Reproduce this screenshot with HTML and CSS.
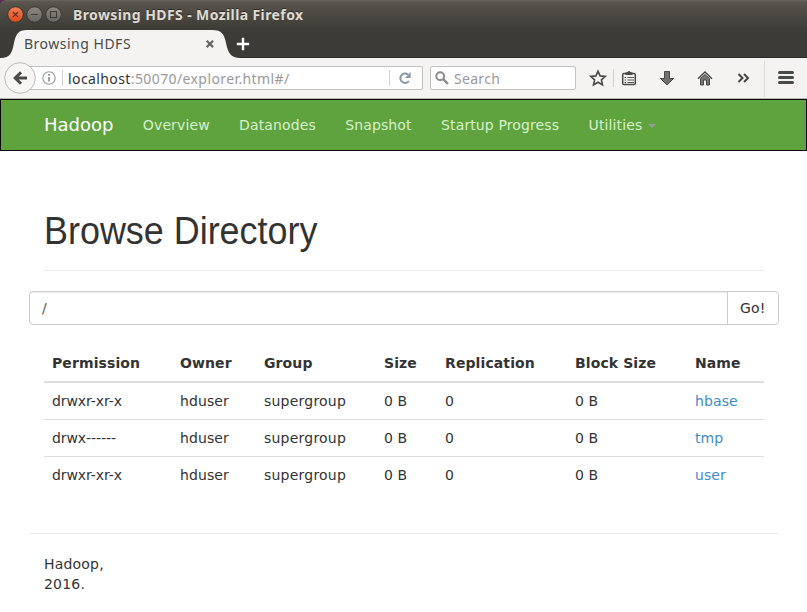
FILE: index.html
```html
<!DOCTYPE html>
<html lang="en">
<head>
<meta charset="utf-8">
<title>Browsing HDFS</title>
<link rel="stylesheet" href="styles.css">
</head>
<body>
<div class="chrome">
  <div class="titlebar">
    <svg class="winbtns" width="64" height="20" viewBox="0 0 64 20">
      <defs>
        <linearGradient id="orange" x1="0" y1="0" x2="0" y2="1"><stop offset="0" stop-color="#f4805a"/><stop offset="1" stop-color="#df4a16"/></linearGradient>
        <linearGradient id="gray" x1="0" y1="0" x2="0" y2="1"><stop offset="0" stop-color="#8b8981"/><stop offset="1" stop-color="#68665f"/></linearGradient>
      </defs>
      <g stroke="#35342f">
        <circle cx="15.5" cy="10.5" r="7.8" fill="url(#orange)"/>
        <circle cx="34.5" cy="10.5" r="7.8" fill="url(#gray)"/>
        <circle cx="53.5" cy="10.5" r="7.8" fill="url(#gray)"/>
      </g>
      <path d="M12.8 7.8l5.4 5.4M18.2 7.8l-5.4 5.4" stroke="#5d2a18" stroke-width="1.2"/>
      <path d="M31 10.500h7M50.500 7.500h6v6h-6z" fill="none" stroke="#3c3b36" stroke-width="1.100"/>
    </svg>
    <span class="wintitle">Browsing HDFS - Mozilla Firefox</span>
  </div>
  <div class="tabs">
    <svg class="tabshape" width="242" height="28" viewBox="0 0 242 28"><path d="M0 28C11 28 12 22 14 13C16 4 18 0 27 0H212C222 0 224 4 226 13C228 22 230 28 241 28Z" fill="#f4f3f1"/></svg>
    <span class="tabtitle">Browsing HDFS</span>
    <svg class="tabclose" width="10" height="10" viewBox="0 0 10 10"><path d="M1.7 1.7l6.4 6.4M8.1 1.7L1.7 8.1" stroke="#666664" stroke-width="2.2"/></svg>
    <svg class="newtab" width="14" height="14" viewBox="0 0 14 14"><path d="M7 .8v12.4M.8 7h12.4" stroke="#fff" stroke-width="2.4"/></svg>
  </div>
  <div class="toolbar">
    <div class="urlbar">
      <svg class="info" width="14" height="14" viewBox="0 0 14 14"><circle cx="7" cy="7" r="6.2" fill="none" stroke="#989898" stroke-width="1.1"/><path d="M7 6v4.5M7 3v1.8" stroke="#858585" stroke-width="1.6"/></svg>
      <i class="sep"></i>
      <span class="url"><b>localhost</b>:50070/explorer.html#/</span>
      <i class="sep reloadsep"></i>
      <svg class="reload" width="14" height="14" viewBox="0 0 14 14"><path d="M10 3.600A4.700 4.700 0 1 0 10.900 10" fill="none" stroke="#8799a8" stroke-width="2"/><path d="M12.700 1v6H7z" fill="#8799a8"/></svg>
    </div>
    <svg class="back" width="34" height="34" viewBox="0 0 34 34"><circle cx="16" cy="17" r="15.3" fill="#f7f6f5" stroke="#bdbbb7"/><path d="M23 17H11.500M17 11.200l-5.800 5.800 5.800 5.800" fill="none" stroke="#4b4b49" stroke-width="3"/></svg>
    <div class="search">
      <svg width="14" height="14" viewBox="0 0 14 14"><circle cx="5.2" cy="5.2" r="3.9" fill="none" stroke="#8c8c8c" stroke-width="2"/><path d="M8.2 8.2l4.7 4.6" stroke="#8c8c8c" stroke-width="2.4"/></svg>
      <span>Search</span>
    </div>
    <svg class="tools" width="227" height="40" viewBox="580 58 227 40">
      <path d="M598 71.200l2.100 4.700 5.100.5-3.800 3.400 1.100 5-4.500-2.600-4.500 2.600 1.100-5-3.800-3.400 5.100-.5z" fill="none" stroke="#4c4c4a" stroke-width="1.600"/>
      <path d="M613.500 69v18" stroke="#d2d0cc"/>
      <path d="M624 73.500h10q1.300 0 1.300 1.300v8.400q0 1.300-1.300 1.300h-10q-1.300 0-1.300-1.300v-8.400q0-1.300 1.300-1.300z" fill="#f4f3f1" stroke="#494947" stroke-width="1.500"/>
      <path d="M625.500 75v-2.500l2-.5q1.500-2 3 0l2 .5V75z" fill="#494947"/>
      <path d="M624.500 77.500h1.500M627.500 77.500h6.500M624.500 80h1.500M627.500 80h6.500M624.500 82.500h1.500M627.500 82.500h6.500" stroke="#555553" stroke-width="1.100"/>
      <path d="M664.500 71.500h5v7h4l-6.500 6.500-6.500-6.500h4z" fill="#70706e" stroke="#474745"/>
      <path d="M700.500 78.500l4.500-4 4.500 4v6.500h-3v-5h-3v5h-3z" fill="#777775" stroke="#474745"/>
      <path d="M698 78.700l7-6.700 7 6.700" fill="none" stroke="#474745" stroke-width="1.400"/>
      <path d="M738.500 74l4 4-4 4M744 74l4 4-4 4" fill="none" stroke="#454543" stroke-width="2"/>
      <path d="M764.500 61v36" stroke="#dddbd7"/>
      <path d="M779.500 72.500h13M779.500 77.500h13M779.500 82.500h13" stroke="#484a48" stroke-width="3" stroke-linecap="round"/>
    </svg>
  </div>
</div>
<nav class="navbar">
  <a class="brand">Hadoop</a>
  <a>Overview</a><a>Datanodes</a><a>Snapshot</a><a>Startup Progress</a><a>Utilities<i class="caret"></i></a>
</nav>
<main>
  <header class="pagehead"><h1>Browse Directory</h1></header>
  <form class="path"><div class="field">/</div><div class="go">Go!</div></form>
  <table>
    <colgroup><col class="c1"><col class="c2"><col class="c3"><col class="c4"><col class="c5"><col class="c6"><col class="c7"></colgroup>
    <thead><tr><th>Permission</th><th>Owner</th><th>Group</th><th>Size</th><th>Replication</th><th>Block Size</th><th>Name</th></tr></thead>
    <tbody>
      <tr><td class="perm">drwxr-xr-x</td><td>hduser</td><td class="group">supergroup</td><td>0 B</td><td>0</td><td>0 B</td><td><a>hbase</a></td></tr>
      <tr><td class="perm">drwx------</td><td>hduser</td><td class="group">supergroup</td><td>0 B</td><td>0</td><td>0 B</td><td><a>tmp</a></td></tr>
      <tr><td class="perm">drwxr-xr-x</td><td>hduser</td><td class="group">supergroup</td><td>0 B</td><td>0</td><td>0 B</td><td><a>user</a></td></tr>
    </tbody>
  </table>
  <footer><p>Hadoop,<br>2016.</p></footer>
</main>
</body>
</html>
```

FILE: styles.css
```css
* { box-sizing: border-box; }
body { margin: 0; width: 807px; height: 612px; overflow: hidden; background: #fff; color: #333; font: 14px/20px "DejaVu Sans", sans-serif; }
svg { display: block; flex: none; }
.chrome { font-family: "Noto Sans", sans-serif; background: linear-gradient(#5e2750 6px, #3c3b37 6px); }
.titlebar { height: 30px; display: flex; align-items: center; background: linear-gradient(#5d5950 0, #55524a 4px, #3c3b37 29px); border-top: 1px solid #68645b; border-radius: 6px 0 0 0; }
.winbtns { margin-top: -3px; }
.wintitle { margin: -2px 0 0 9px; color: #dfdbd2; font-weight: 700; font-size: 14px; letter-spacing: .4px; white-space: nowrap; text-shadow: 0 -1px #2d2c29; }
.tabs { position: relative; height: 28px; display: flex; align-items: center; background: #3c3b37; border-bottom: 1px solid #2b2926; }
.tabshape { position: absolute; left: 0; top: 0; }
.tabtitle { position: relative; margin-left: 24px; width: 181px; color: #4b4b4b; font-size: 14px; letter-spacing: .5px; }
.tabclose { position: relative; }
.newtab { margin-left: 21px; }
.toolbar { position: relative; height: 41px; display: flex; align-items: center; background: #f4f3f1; border-bottom: 1px solid #b9b5ae; }
.urlbar, .search { height: 24px; background: #fff; border: 1px solid #c4c1bb; border-radius: 2px; display: flex; align-items: center; }
.urlbar { width: 404px; margin-left: 19px; padding-left: 22px; }
.back { position: absolute; left: 4px; top: 3px; }
.sep { width: 1px; height: 16px; background: #d0d0d0; margin-left: 6px; }
.url { margin: 1px 0 0 5px; width: 321px; color: #999; font-size: 14px; letter-spacing: .4px; }
.url b { font-weight: 400; color: #333; }
.reloadsep { margin-left: 0; }
.reload { margin-left: 8px; }
.search { width: 146px; margin-left: 7px; padding-left: 4px; color: #999; letter-spacing: .3px; }
.search span { margin: 1px 0 0 5px; }
.tools { margin-left: 4px; }
.navbar { height: 52px; border: 1px solid #080808; background: #5fa33e; display: flex; align-items: center; padding: 0 0 0 43px; color: #d8f0cc; white-space: nowrap; letter-spacing: .12px; }
.navbar a { margin-right: 29.4px; display: flex; align-items: center; }
.navbar .brand { color: #fff; font-size: 18px; letter-spacing: 0; }
.caret { margin-left: 6px; border: 4px solid transparent; border-top-color: #999; border-bottom: 0; margin-top: 2px; }
main { width: 808px; padding: 0 29px; }
.pagehead { margin: 55px 15px 20px; height: 65px; border-bottom: 1px solid #eee; }
h1 { margin: 0; font: 400 38px/50px "Liberation Sans", sans-serif; transform: scaleX(.945); transform-origin: 0 0; white-space: nowrap; }
.path { height: 34px; width: 750px; display: flex; border: 1px solid #ccc; border-radius: 4px; line-height: 32px; }
.field { width: 698px; padding-left: 12px; color: #555; border-right: 1px solid #ccc; box-shadow: inset 0 1px 1px rgba(0,0,0,.075); }
.go { padding-left: 12px; letter-spacing: .2px; }
table { width: 720px; margin: 20px 15px 0; table-layout: fixed; border-collapse: separate; border-spacing: 0; letter-spacing: .1px; }
.c1 { width: 128px; } .c2 { width: 84px; } .c3 { width: 120px; } .c4 { width: 61px; } .c5 { width: 130px; } .c6 { width: 120px; } .c7 { width: 77px; }
th, td { padding: 8px; text-align: left; white-space: nowrap; }
th { border-bottom: 2px solid #ddd; }
tr + tr td { border-top: 1px solid #ddd; }
.perm { letter-spacing: -.08px; }
.group { letter-spacing: .22px; }
td a { color: #428bca; }
footer { margin-top: 40px; border-top: 1px solid #eee; padding: 20px 15px; letter-spacing: .2px; }
footer p { margin: 0; }
```
